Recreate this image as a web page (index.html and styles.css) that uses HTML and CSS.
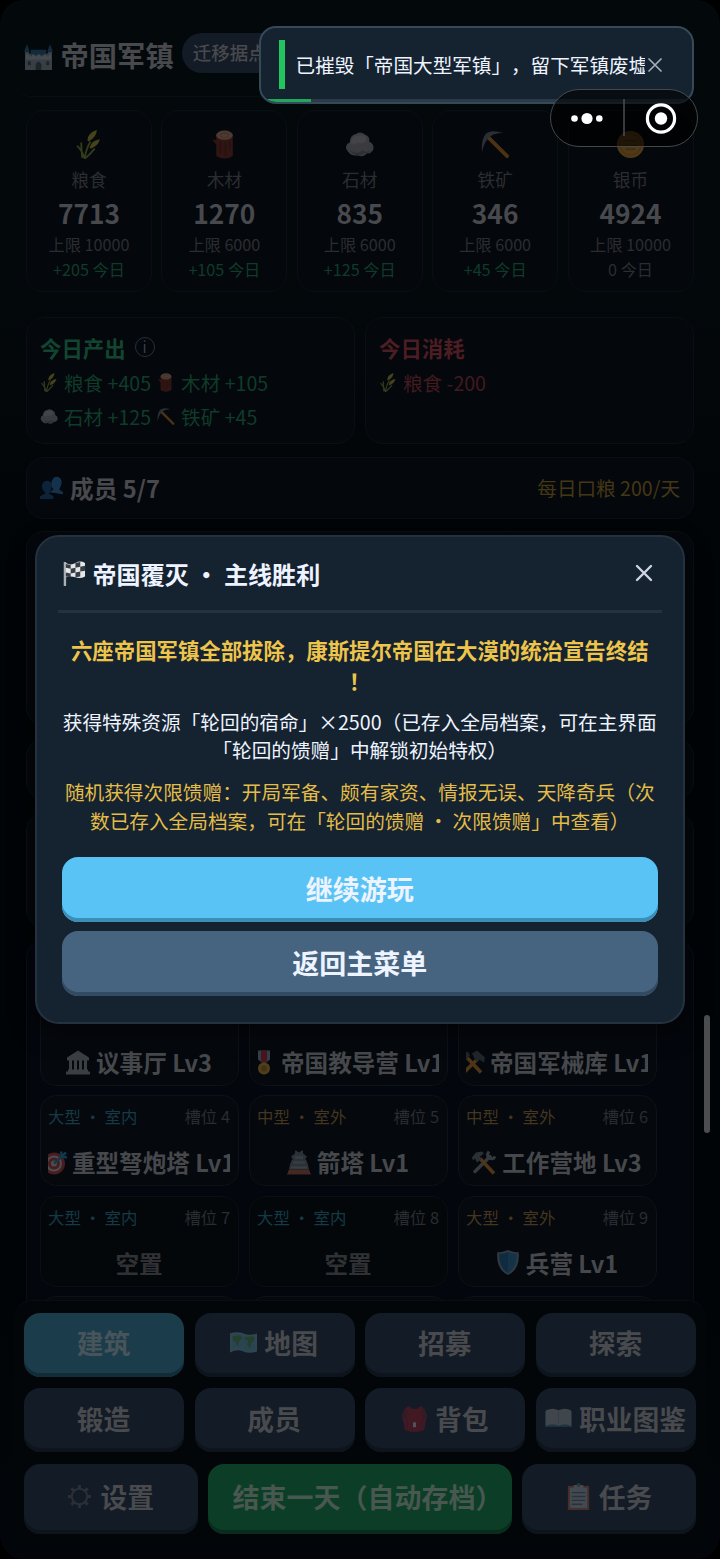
FILE: index.html
```html
<!DOCTYPE html>
<html lang="zh-CN">
<head>
<meta charset="utf-8">
<title>帝国军镇</title>
<link rel="stylesheet" href="styles.css">
</head>
<body>
<svg class="sprites" aria-hidden="true">
  <symbol id="castle" viewBox="0 0 30 28"><path fill="#a9b4bd" d="M1 9h4v2h20V9h4v19H1z"/><path fill="#2f72a5" d="M0 9l3-8 3 8zM24 9l3-8 3 8zM7 7h16v6H7z"/><path fill="#cfd5da" d="M2 12h3v2h3v-2h3v2h3v-2h3v2h3v-2h3v2h3v-2h2v5H2z"/><path fill="#58626c" d="M12 28v-6q3-5 6 0v6zM4 19h3v4H4zM23 19h3v4h-3z"/></symbol>
  <symbol id="grain" viewBox="0 0 24 28"><g fill="none" stroke="#8fa83a" stroke-width="1.8"><path d="M8 28Q10 17 14 11M8 28Q13 24 18 18M8 27Q6 20 1 15M6 27Q5 17 5 12"/></g><path fill="#d2c13c" d="M11 10Q11 3 20 0Q20 7 12 11zM13 17Q15 10 23 9Q21 16 14 18z"/></symbol>
  <symbol id="wood" viewBox="0 0 24 28"><path fill="#8c3420" d="M4 5v20q8 5 16 0V5zM4 14l-4-5 4 1z"/><ellipse cx="12" cy="5" rx="8" ry="4.5" fill="#e4a882"/><ellipse cx="12" cy="5" rx="4" ry="2" fill="none" stroke="#c58562"/><path stroke="#6e2418" stroke-width="1.3" d="M8 11v12M13 12v13M17 11v9"/></symbol>
  <symbol id="stone" viewBox="0 0 30 28"><path fill="#aaa" d="M1 18Q1 13 5 12Q5 4 12 3Q16 0 21 4Q26 6 25 11Q31 14 29 20Q26 24 23 23Q18 28 13 25Q5 27 1 18z"/><path fill="#c6c6c6" d="M6 12Q8 4 14 5Q22 3 22 10Q17 14 13 12Q9 16 6 12z"/><path fill="#888" d="M5 20q8 5 13 0 5 3 9 0-2 4-7 3-8 6-15-3z"/></symbol>
  <symbol id="pick" viewBox="0 0 30 30"><path stroke="#e48b21" stroke-width="4" stroke-linecap="round" d="M7 7l20 20"/><path fill="#78838a" d="M1 23Q0 10 5 4Q10-1 23 3Q12 3 8 8Q3 13 1 23z"/></symbol>
  <symbol id="coin" viewBox="0 0 30 30"><circle cx="15" cy="15" r="14" fill="#efa42c"/><circle cx="15" cy="15" r="11" fill="none" stroke="#d98920" stroke-width="1.5"/><path stroke="#c67b20" stroke-width="2" d="M8 11h14M8 16h14M10 20h10"/></symbol>
  <symbol id="people" viewBox="0 0 24 24"><path fill="#3b8cd5" d="M10 17l4-3q-3-3-2-8 2-6 7-5 5 2 3 9l-2 4 4 3v2z"/><path fill="#1f639c" d="M0 24v-3l6-3Q2 15 2 10Q3 5 8 5Q13 6 12 12Q12 16 9 18L14 21V24z"/></symbol>
  <symbol id="flag" viewBox="0 0 24 26"><path stroke="#aab0b6" stroke-width="2.5" d="M2 1v25"/><path fill="#e5e7e9" d="M3 2q5 3 10 0t10 0v14q-5 3-10 1T3 17z"/><path fill="#373d43" d="M3 3l5 1v4L3 7zM13 2l5-1v5l-5 1zM8 8l5-1v5l-5 1zM18 6l5-1v5l-5 1zM3 12l5 1v4l-5-1zM13 12l5-1v5l-5 1z"/></symbol>
  <symbol id="hall" viewBox="0 0 24 24"><path fill="#a9b3b7" d="M1 7l11-7 11 7v3H1zM3 10h3v9H3zM8 10h3v9H8zM13 10h3v9h-3zM18 10h3v9h-3zM2 19h20v2H2zM0 21h24v3H0z"/></symbol>
  <symbol id="medal" viewBox="0 0 24 24"><path fill="#91b5cc" d="M6 0h12v9l-5 4h-2L6 9z"/><path fill="#df3348" d="M9 0h6v12H9z"/><circle cx="12" cy="18" r="6" fill="#eeb43a"/><circle cx="12" cy="18" r="3" fill="#c98622"/></symbol>
  <symbol id="hammers" viewBox="0 0 24 24"><path stroke="#e79528" stroke-width="3.5" d="M4 21L18 7M5 6l15 16"/><path fill="#56636c" d="M11 3L16 0l8 7-1 5-5-3-3 2zM1 8q0-5 6-7l2 4-4 5z"/></symbol>
  <symbol id="target" viewBox="0 0 24 24"><circle cx="11" cy="13" r="11" fill="#d94848"/><circle cx="11" cy="13" r="8" fill="#ddd"/><circle cx="11" cy="13" r="6" fill="#d94848"/><circle cx="11" cy="13" r="3" fill="#ddd"/><path stroke="#2b9ad4" stroke-width="2.5" d="M11 13L23 2M18 1l1 5 5 1"/></symbol>
  <symbol id="tower" viewBox="0 0 24 24"><path fill="#7b8a90" d="M8 0h1l3 2 3-2h1v3l4 3-2 3H6L4 6l4-3zM5 9h14l2 5H3zM3 14h18l1 5H2z"/><path fill="#abb3b5" d="M8 6h8v2H8zM6 11h12v2H6zM4 16h16v2H4z"/><path fill="#c96b52" d="M2 19h20l2 5H0z"/></symbol>
  <symbol id="tools" viewBox="0 0 24 24"><path stroke="#93a1aa" stroke-width="3.5" stroke-linecap="round" d="M3 21L18 6"/><path fill="none" stroke="#93a1aa" stroke-width="3" d="M17 1q-3 4 0 6 4 3 6-1"/><path stroke="#e79528" stroke-width="3.5" d="M8 8l14 15"/><path fill="#76848d" d="M0 7l4-5 6-1 2 2-4 3 1 3-4 3-2-4-2 2z"/></symbol>
  <symbol id="shield" viewBox="0 0 24 26"><path fill="#88a2ae" d="M12 0q6 3 11 2 2 18-11 24Q-1 20 1 2q5 1 11-2z"/><path fill="#358fc8" d="M12 2q5 2 9 2 1 14-9 20z"/><path fill="#2874a8" d="M12 2Q7 4 3 4 2 18 12 24z"/></symbol>
  <symbol id="map" viewBox="0 0 30 24"><path fill="#78b2bc" d="M0 2q8-3 15 0t15 0v20q-8 3-15 0t-15 1z"/><path fill="#67a8bd" d="M2 4q7-3 13 0t13 0v16q-7 3-13 0t-13 0z"/><path fill="#4e963c" d="M3 5l8-1 3 3-4 4-1 6-3-5-3-3zM17 6l8-1 3 3-4 4-2 7-3-4 1-5-4-1z"/></symbol>
  <symbol id="bag" viewBox="0 0 28 28"><path fill="#b5161f" d="M5 3Q8-1 11 4h6Q20-1 23 3l4 7-3 16q-10 4-20 0L1 10z"/><path fill="#7c1c22" d="M3 4l4 2-1 9-5-2zM25 4l-4 2 1 9 5-2zM6 25V15h1v11zM21 25V15h1v10z"/><path fill="#e5e5dc" d="M12.500 18h3v5h-3z"/></symbol>
  <symbol id="book" viewBox="0 0 26 24"><path fill="#43758b" d="M0 5h26v15H0z"/><path fill="#afb1a9" d="M1 4q7-3 12 0v15q-6-3-12 0zM13 4q6-3 12 0v15q-6-3-12 0z"/><path stroke="#8f9895" d="M13 4v15"/></symbol>
  <symbol id="gear" viewBox="0 0 26 28"><circle cx="13" cy="14" r="8" fill="none" stroke="#65625f" stroke-width="2"/><path fill="none" stroke="#65625f" stroke-width="3" d="M13 2v4M13 22v4M1 14h4M21 14h4M4.500 5.500l3 3M18.500 19.500l3 3M21.500 5.500l-3 3M7.500 19.500l-3 3"/></symbol>
  <symbol id="clip" viewBox="0 0 24 28"><path fill="#c45e36" d="M1 3h22v25H1z"/><path fill="#b7bbb7" d="M3 5h18v21H3zM7 2h10v5H7z"/><path stroke="#5e6a6d" stroke-width="1.5" d="M5 10h14M5 14h14M5 18h14M5 22h11"/><circle cx="12" cy="2" r="2" fill="#67747b"/></symbol>
</svg>

<main class="app">
  <header class="top">
    <svg class="icon castle"><use href="#castle"/></svg>
    <h1>帝国军镇</h1>
    <button class="move">迁移据点</button>
  </header>

  <section class="resources">
    <div class="res"><svg class="icon"><use href="#grain"/></svg><span class="name">粮食</span><b>7713</b><small>上限 10000</small><small class="up">+205 今日</small></div>
    <div class="res"><svg class="icon"><use href="#wood"/></svg><span class="name">木材</span><b>1270</b><small>上限 6000</small><small class="up">+105 今日</small></div>
    <div class="res"><svg class="icon"><use href="#stone"/></svg><span class="name">石材</span><b>835</b><small>上限 6000</small><small class="up">+125 今日</small></div>
    <div class="res"><svg class="icon"><use href="#pick"/></svg><span class="name">铁矿</span><b>346</b><small>上限 6000</small><small class="up">+45 今日</small></div>
    <div class="res"><svg class="icon coin"><use href="#coin"/></svg><span class="name">银币</span><b>4924</b><small>上限 10000</small><small>0 今日</small></div>
  </section>

  <section class="flows">
    <div class="flow gain">
      <h2>今日产出<span class="info">i</span></h2>
      <p><svg class="icon"><use href="#grain"/></svg><span>粮食 +405</span><svg class="icon"><use href="#wood"/></svg><span>木材 +105</span></p>
      <p><svg class="icon"><use href="#stone"/></svg><span>石材 +125</span><svg class="icon"><use href="#pick"/></svg><span>铁矿 +45</span></p>
    </div>
    <div class="flow cost">
      <h2>今日消耗</h2>
      <p><svg class="icon"><use href="#grain"/></svg><span>粮食 -200</span></p>
    </div>
  </section>

  <section class="members">
    <svg class="icon"><use href="#people"/></svg><h2>成员 5/7</h2><span class="ration">每日口粮 200/天</span>
  </section>
  <section class="panel roster"></section>
  <section class="panel strip"></section>
  <section class="panel summary"></section>

  <section class="panel slots">
    <div class="slot"><p class="name"><svg class="icon"><use href="#hall"/></svg>议事厅 Lv3</p></div>
    <div class="slot"><p class="name full"><svg class="icon"><use href="#medal"/></svg>帝国教导营 Lv1</p></div>
    <div class="slot"><p class="name full"><svg class="icon"><use href="#hammers"/></svg>帝国军械库 Lv1</p></div>
    <div class="slot"><p class="meta"><span class="in">大型 · 室内</span><span>槽位 4</span></p><p class="name full"><svg class="icon"><use href="#target"/></svg>重型弩炮塔 Lv1</p></div>
    <div class="slot"><p class="meta"><span class="out">中型 · 室外</span><span>槽位 5</span></p><p class="name"><svg class="icon"><use href="#tower"/></svg>箭塔 Lv1</p></div>
    <div class="slot"><p class="meta"><span class="out">中型 · 室外</span><span>槽位 6</span></p><p class="name"><svg class="icon"><use href="#tools"/></svg>工作营地 Lv3</p></div>
    <div class="slot empty"><p class="meta"><span class="in">大型 · 室内</span><span>槽位 7</span></p><p class="name">空置</p></div>
    <div class="slot empty"><p class="meta"><span class="in">大型 · 室内</span><span>槽位 8</span></p><p class="name">空置</p></div>
    <div class="slot"><p class="meta"><span class="out">大型 · 室外</span><span>槽位 9</span></p><p class="name"><svg class="icon"><use href="#shield"/></svg>兵营 Lv1</p></div>
    <div class="slot"></div><div class="slot"></div><div class="slot"></div>
  </section>

  <nav class="dock">
    <div class="row">
      <button class="active">建筑</button>
      <button><svg class="icon"><use href="#map"/></svg>地图</button>
      <button>招募</button>
      <button>探索</button>
    </div>
    <div class="row">
      <button>锻造</button>
      <button>成员</button>
      <button><svg class="icon"><use href="#bag"/></svg>背包</button>
      <button><svg class="icon"><use href="#book"/></svg>职业图鉴</button>
    </div>
    <div class="row last">
      <button><svg class="icon"><use href="#gear"/></svg>设置</button>
      <button class="end">结束一天（自动存档）</button>
      <button><svg class="icon"><use href="#clip"/></svg>任务</button>
    </div>
  </nav>
</main>

<div class="scrollbar"></div>

<div class="modal">
  <div class="modal-head">
    <svg class="flag"><use href="#flag"/></svg>
    <h2>帝国覆灭 · 主线胜利</h2>
    <svg class="close" viewBox="0 0 18 18"><path d="M2 2l14 14M16 2L2 16"/></svg>
  </div>
  <div class="modal-body">
    <p class="lead">六座帝国军镇全部拔除，康斯提尔帝国在大漠的统治宣告终结<br>！</p>
    <p class="text">获得特殊资源「轮回的宿命」×2500（已存入全局档案，可在主界面<br>「轮回的馈赠」中解锁初始特权）</p>
    <p class="text gold">随机获得次限馈赠：开局军备、颇有家资、情报无误、天降奇兵（次<br>数已存入全局档案，可在「轮回的馈赠 · 次限馈赠」中查看）</p>
    <button class="primary">继续游玩</button>
    <button class="secondary">返回主菜单</button>
  </div>
</div>

<div class="toast">
  <i class="mark"></i>
  <span class="message">已摧毁「帝国大型军镇」，留下军镇废墟</span>
  <svg class="dismiss" viewBox="0 0 14 14"><path d="M1 1l12 12M13 1L1 13"/></svg>
  <div class="progress"></div>
</div>

<div class="capsule">
  <svg viewBox="0 0 148 58"><g fill="#fff"><circle cx="24.5" cy="29.500" r="3.300"/><circle cx="37" cy="29.500" r="5.600"/><circle cx="49.300" cy="29.500" r="3.300"/><circle cx="111" cy="29.500" r="6.200"/></g><path stroke="#4b4e51" stroke-width="1.500" d="M74 10v37"/><circle cx="111" cy="29.500" r="13.600" fill="none" stroke="#fff" stroke-width="3.200"/></svg>
</div>
</body>
</html>
```
FILE: styles.css
```css
* { box-sizing: border-box; margin: 0; padding: 0; }
html { background: #000; }
body {
  position: relative;
  width: 720px;
  height: 1559px;
  overflow: hidden;
  background: #000;
  color: #48494c;
  font-family: "Noto Sans CJK SC", sans-serif;
}
button { border: 0; font: inherit; color: inherit; white-space: nowrap; }
p, h1, h2, span { white-space: nowrap; }
.sprites { position: absolute; width: 0; height: 0; }
.icon { flex: none; opacity: .32; }

.app {
  display: flex;
  flex-direction: column;
  height: 1559px;
  padding: 12px 14px 11px;
  border-radius: 24px;
  background: linear-gradient(#03080b 0, #03080b 290px, #020608 430px, #010406 600px, #010406 1300px, #02060a 1559px);
}

.top {
  display: flex;
  align-items: center;
  height: 85px;
  flex: none;
  padding: 2px 9px 0 10px;
  border-bottom: 1.500px solid #080e12;
  border-radius: 18px;
}
.castle { width: 29px; height: 27px; margin-top: 3px; }
.top h1 { margin: -1px 0 0 7.500px; font-size: 28.300px; line-height: 40px; }
.move {
  height: 40px;
  margin: -5px 0 0 8px;
  padding: 0 24px 2px 11px;
  border-radius: 20px;
  background: #131b26;
  font-size: 18.500px;
  font-weight: 500;
}

.resources {
  display: grid;
  grid-template-columns: repeat(5, 1fr);
  gap: 9.500px;
  flex: none;
  margin: 13px 12px 0;
  width: 667.500px;
}
.res, .flow, .members, .panel {
  border: 1.500px solid #0a0f13;
  border-radius: 18px;
  background: #04070c;
}
.res {
  display: flex;
  flex-direction: column;
  align-items: center;
  height: 182px;
  padding-top: 19px;
}
.res .icon { width: 29px; height: 29px; }
.res .name { margin-top: 7px; font-size: 17.700px; line-height: 26px; color: #2b2d30; }
.res b { margin-top: 3px; font-size: 26.300px; line-height: 36px; }
.res small { font-size: 16.200px; line-height: 25px; color: #2b2d30; white-space: nowrap; position: relative; top: .5px; }
.res .up { color: #0e3c29; }

.flows {
  display: grid;
  grid-template-columns: 1fr 1fr;
  gap: 10px;
  flex: none;
  width: 668px;
  height: 127px;
  margin: 25px 12px 0;
}
.flow { padding: 13px 13px 0; }
.flow h2 { display: flex; align-items: center; gap: 9px; height: 32px; font-size: 21.400px; }
.flow p { display: flex; align-items: center; height: 34px; margin-top: 2px; font-size: 19.600px; }
.flow p + p { margin-top: 0; }
.flow .icon { width: 18px; height: 19px; margin-right: 6px; }
.flow span + .icon { margin-left: 6px; }
.gain { color: #0f3c29; }
.gain h2 { color: #124530; }
.cost { color: #421a1f; }
.cost h2 { color: #4c1d22; }
.info {
  display: grid;
  place-items: center;
  width: 20px;
  height: 20px;
  border: 1px solid #26303c;
  border-radius: 50%;
  color: #35404f;
  font-size: 15px;
  font-weight: 400;
  line-height: 18px;
}

.members {
  display: flex;
  align-items: center;
  flex: none;
  width: 668px;
  height: 62px;
  margin: 13px 12px 0;
  padding: 0 13px 1px;
}
.members .icon { width: 23px; height: 23px; margin-right: 7px; }
.members h2 { font-size: 23.700px; font-weight: 700; }
.ration { margin-left: auto; font-size: 19.600px; color: #443814; }

.panel { flex: none; width: 668px; margin: 12px 12px 0; }
.roster { height: 195px; }
.strip { height: 62px; }
.summary { height: 116px; }

.slots {
  display: grid;
  grid-template-columns: repeat(3, 199px);
  grid-auto-rows: 91px;
  gap: 9.300px 10px;
  height: 361px;
  padding: 54px 0 0 12.500px;
  align-content: start;
  overflow: hidden;
  border-bottom: 0;
  border-radius: 18px 18px 0 0;
  background: #03060c;
}
.slot {
  display: flex;
  flex-direction: column;
  justify-content: flex-end;
  padding: 0 7.500px 3px;
  border: 1.500px solid #0d1217;
  border-radius: 16px;
  background: #05080d;
}
.slot.empty { background: #03070a; border-color: #090f12; }
.meta { display: flex; justify-content: space-between; font-size: 16.400px; line-height: 22px; color: #292c30; }
.in { color: #153a46; }
.out { color: #44361f; }
.slot .name {
  display: flex;
  align-items: center;
  justify-content: center;
  height: 40px;
  margin-top: 15px;
  overflow: hidden;
  font-size: 23.600px;
  font-weight: 700;
  color: #46484c;
}
.slot .full { justify-content: flex-start; }
.slot .name .icon { width: 24px; height: 25px; margin-right: 6px; }
.slot .full .icon { margin-left: -5px; margin-right: 5px; }
.slot.empty .name { color: #2f3134; }

.dock {
  position: relative;
  display: flex;
  flex-direction: column;
  gap: 11.500px;
  flex: none;
  height: 248px;
  margin-top: -1.500px;
  padding: 12px 10px 0;
  border-top: 1.500px solid #090e12;
  border-radius: 18px;
  background: #020609;
}
.row { display: grid; grid-template-columns: repeat(4, 1fr); gap: 10.700px; width: 672px; height: 64px; flex: none; }
.row.last { grid-template-columns: 173.500px 303.500px 173.500px; height: 70px; }
.row button {
  display: flex;
  align-items: center;
  justify-content: center;
  gap: 7px;
  padding: 0 1px 4px 0;
  border-radius: 16px;
  background: #131b26;
  box-shadow: inset 0 -4px #0d141c;
  font-size: 26.800px;
  font-weight: 700;
  color: #484a4d;
}
.row .icon { width: 27px; height: 27px; opacity: .29; }
.row .active { background: #1a3c4b; box-shadow: inset 0 -4px #132d38; color: #47545a; }
.row .end { padding-left: 16px; background: #0c3e27; box-shadow: inset 0 -4px #082d1c; color: #48574f; font-size: 27px; }

.scrollbar { position: absolute; left: 704px; top: 1015px; width: 5.500px; height: 118px; border-radius: 3px; background: #4b4d4f; }

.modal {
  position: absolute;
  left: 34.500px;
  top: 534.500px;
  width: 650.500px;
  height: 489.500px;
  padding: 0 21px;
  border: 2.500px solid #24323f;
  border-radius: 24px;
  background: #152230;
  box-shadow: 0 8px 24px #0008;
  color: #eef4ff;
}
.modal-head { display: flex; align-items: center; height: 76px; padding: 1px 9px 0 5px; border-bottom: 3px solid #24323f; }
.flag { width: 23px; height: 25px; margin-right: 7px; }
.modal-head h2 { font-size: 24.100px; line-height: 34px; }
.close { width: 18px; height: 18px; margin: -1px 0 0 auto; fill: none; stroke: #ccd4e5; stroke-width: 2.400; stroke-linecap: round; }
.modal-body { display: flex; flex-direction: column; padding: 21px 4.500px 0; text-align: center; }
.lead { font-size: 21.400px; line-height: 31px; font-weight: 700; color: #eec54b; }
.text { margin-top: 12px; font-size: 19.660px; line-height: 28.500px; margin-left: -10px; margin-right: -10px; }
.text + .text { margin-top: 13.500px; }
.gold { color: #e3bd48; }
.modal button { height: 65px; padding-bottom: 2px; border-radius: 16px; font-size: 27px; font-weight: 700; }
.primary { margin-top: 22px; background: #59c3f6; box-shadow: inset 0 -4px #3b8eb5; }
.secondary { margin-top: 8.500px; background: #466480; box-shadow: inset 0 -4px #334b62; }

.toast {
  position: absolute;
  left: 259px;
  top: 25.500px;
  display: flex;
  align-items: center;
  width: 435px;
  height: 78.500px;
  padding: 0 28px 0 17.500px;
  overflow: hidden;
  border: 2.500px solid #364957;
  border-radius: 17px;
  background: #152230;
  color: #eef4ff;
}
.mark { flex: none; width: 6px; height: 49px; background: #22c55e; }
.message {
  flex: none;
  width: 349px;
  margin-left: 11px;
  overflow: hidden;
  font-size: 19.600px;
  line-height: 30px;
  text-spacing-trim: space-all;
}
.dismiss { flex: none; width: 14px; height: 14px; margin-left: 3px; fill: none; stroke: #a2adba; stroke-width: 1.700; stroke-linecap: round; }
.progress { position: absolute; left: 0; right: 0; bottom: 0; height: 3px; background: linear-gradient(90deg, #22a55d 50px, #293a49 50px); }

.capsule {
  position: absolute;
  left: 550px;
  top: 89px;
  width: 148px;
  height: 58px;
  border: 1.500px solid #44484b;
  border-radius: 29px;
  background: rgba(0, 0, 0, .6);
}
.capsule svg { display: block; width: 148px; height: 58px; margin: -1px; }
```
